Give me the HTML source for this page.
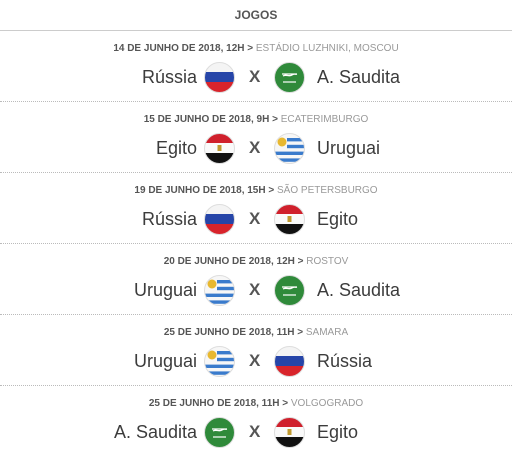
<!DOCTYPE html>
<html><head><meta charset="utf-8"><style>
body{margin:0;background:#fff;font-family:"Liberation Sans",sans-serif;width:515px;height:462px;overflow:hidden}
.title{position:absolute;top:8px;left:0;width:512px;text-align:center;font-size:12px;font-weight:bold;color:#555}
.hr{position:absolute;left:0;width:512px;top:30px;border-top:1px solid #ccc}
.row{position:absolute;left:0;width:512px;height:71px}
.row.sep{border-top:1px dotted #bbb}
.date{position:absolute;top:12px;width:512px;text-align:center;font-size:10px;color:#999}
.date b{color:#555}
.l{position:absolute;right:315px;top:36px;font-size:18px;color:#3c3c3c}
.r{position:absolute;left:317px;top:36px;font-size:18px;color:#3c3c3c}
.x{position:absolute;left:249px;top:36px;font-size:17px;font-weight:bold;color:#555}
svg{position:absolute;top:31px;width:31px;height:31px}
.f1{left:204px}.f2{left:274px}
</style></head><body>
<svg width="0" height="0" style="position:absolute">
<defs>
<clipPath id="c"><circle cx="15.5" cy="15.5" r="15"/></clipPath>
<g id="ru"><g clip-path="url(#c)"><rect width="31" height="11" fill="#f4f4f4"/><rect y="10" width="31" height="11" fill="#2645a8"/><rect y="20" width="31" height="11" fill="#d8242b"/></g><circle cx="15.5" cy="15.5" r="15" fill="none" stroke="#ddd"/></g>
<g id="eg"><g clip-path="url(#c)"><rect width="31" height="11" fill="#d0202c"/><rect y="10" width="31" height="11" fill="#fafafa"/><rect y="20" width="31" height="11" fill="#111"/></g><rect x="13.5" y="12" width="4" height="6" fill="#c09a30"/><circle cx="15.5" cy="15.5" r="15" fill="none" stroke="#ddd"/></g>
<g id="ur"><g clip-path="url(#c)"><rect width="31" height="31" fill="#f7f7f7"/><rect x="13" y="5" width="18" height="3.4" fill="#3a7bcc"/><rect x="13" y="11.8" width="18" height="3.4" fill="#3a7bcc"/><rect y="18.6" width="31" height="3.4" fill="#3a7bcc"/><rect y="25.4" width="31" height="3.4" fill="#3a7bcc"/><circle cx="8" cy="9" r="4.5" fill="#e8b830"/></g><circle cx="15.5" cy="15.5" r="15" fill="none" stroke="#ddd"/></g>
<g id="sa"><circle cx="15.5" cy="15.5" r="15" fill="#2f8a3a"/><path d="M8 12h15M9 14c3-2 6 1 9-1s3 0 5-1" stroke="#fff" stroke-width="1.3" fill="none"/><path d="M9 20h13" stroke="#fff" stroke-width="1.2"/><circle cx="15.5" cy="15.5" r="15" fill="none" stroke="#ddd"/></g>
</defs></svg>
<div class="title">JOGOS</div>
<div class="hr"></div>

<div class="row" style="top:31px"><div class="date"><b>14 DE JUNHO DE 2018, 12H &gt;</b> ESTÁDIO LUZHNIKI, MOSCOU</div><div class="l">Rússia</div><svg class="f1"><use href="#ru"/></svg><div class="x">X</div><svg class="f2"><use href="#sa"/></svg><div class="r">A. Saudita</div></div>
<div class="row sep" style="top:101px"><div class="date"><b>15 DE JUNHO DE 2018, 9H &gt;</b> ECATERIMBURGO</div><div class="l">Egito</div><svg class="f1"><use href="#eg"/></svg><div class="x">X</div><svg class="f2"><use href="#ur"/></svg><div class="r">Uruguai</div></div>
<div class="row sep" style="top:172px"><div class="date"><b>19 DE JUNHO DE 2018, 15H &gt;</b> SÃO PETERSBURGO</div><div class="l">Rússia</div><svg class="f1"><use href="#ru"/></svg><div class="x">X</div><svg class="f2"><use href="#eg"/></svg><div class="r">Egito</div></div>
<div class="row sep" style="top:243px"><div class="date"><b>20 DE JUNHO DE 2018, 12H &gt;</b> ROSTOV</div><div class="l">Uruguai</div><svg class="f1"><use href="#ur"/></svg><div class="x">X</div><svg class="f2"><use href="#sa"/></svg><div class="r">A. Saudita</div></div>
<div class="row sep" style="top:314px"><div class="date"><b>25 DE JUNHO DE 2018, 11H &gt;</b> SAMARA</div><div class="l">Uruguai</div><svg class="f1"><use href="#ur"/></svg><div class="x">X</div><svg class="f2"><use href="#ru"/></svg><div class="r">Rússia</div></div>
<div class="row sep" style="top:385px"><div class="date"><b>25 DE JUNHO DE 2018, 11H &gt;</b> VOLGOGRADO</div><div class="l">A. Saudita</div><svg class="f1"><use href="#sa"/></svg><div class="x">X</div><svg class="f2"><use href="#eg"/></svg><div class="r">Egito</div></div>
</body></html>
